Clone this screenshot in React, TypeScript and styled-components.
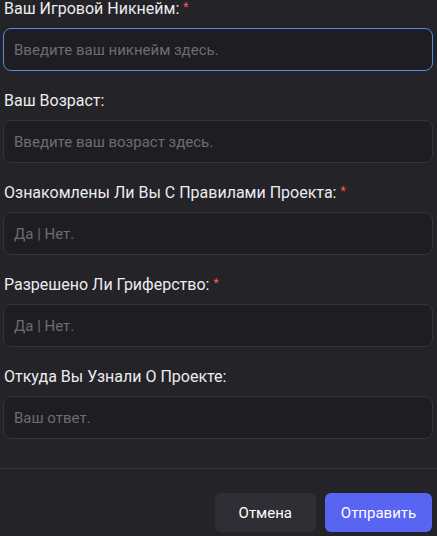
import React from 'react';
import styled, { createGlobalStyle } from 'styled-components';

const Global = createGlobalStyle`
	html, body {
		margin: 0;
		padding: 0;
		background: #232328;
	}
	body {
		font-family: Roboto, 'Noto Sans', sans-serif;
	}
`;

const Modal = styled.div`
	width: 437px;
	height: 536px;
	background: #232328;
	display: flex;
	flex-direction: column;
	overflow: hidden;
`;

const Form = styled.div`
	display: flex;
	flex-direction: column;
	gap: 20px;
	padding: 0 4px 0 3px;
	margin-top: -1px;
`;

const Field = styled.div`
	display: flex;
	flex-direction: column;
	gap: 9px;
`;

const Label = styled.label`
	font-size: 16px;
	line-height: 20px;
	color: #ececef;
	padding-left: 1px;

	span {
		color: #f55a5a;
		font-size: 12px;
		vertical-align: top;
		margin-left: 4px;
		position: relative;
		top: -2px;
	}
`;

const Input = styled.input<{ focused?: boolean }>`
	box-sizing: border-box;
	width: 100%;
	height: 43px;
	border-radius: 8px;
	border: 1px solid ${(p) => (p.focused ? '#4a8fe3' : '#35353b')};
	background: #1e1e22;
	color: #e0e0e3;
	font-family: Roboto, 'Noto Sans', sans-serif;
	font-size: 15px;
	padding: 0 10px;
	outline: none;

	&::placeholder {
		color: #6c6c73;
	}
`;

const Divider = styled.div`
	height: 1px;
	background: #36363c;
	margin-top: 29px;
`;

const Footer = styled.div`
	display: flex;
	justify-content: flex-end;
	gap: 9px;
	padding: 24px 5px 0 0;
`;

const Button = styled.button<{ primary?: boolean }>`
	height: 39px;
	border: none;
	border-radius: 6px;
	padding: 0 ${(p) => (p.primary ? 15 : 24)}px;
	min-width: ${(p) => (p.primary ? 107 : 101)}px;
	font-family: Roboto, 'Noto Sans', sans-serif;
	font-size: 15px;
	color: #ffffff;
	background: ${(p) => (p.primary ? '#5865f2' : '#2e2e34')};
	cursor: pointer;
`;

const fields = [
	{ label: 'Ваш Игровой Никнейм:', placeholder: 'Введите ваш никнейм здесь.', required: true, focused: true },
	{ label: 'Ваш Возраст:', placeholder: 'Введите ваш возраст здесь.' },
	{ label: 'Ознакомлены Ли Вы С Правилами Проекта:', placeholder: 'Да | Нет.', required: true },
	{ label: 'Разрешено Ли Гриферство:', placeholder: 'Да | Нет.', required: true },
	{ label: 'Откуда Вы Узнали О Проекте:', placeholder: 'Ваш ответ.' },
];

export default function App() {
	return (
		<Modal>
			<Global />
			<Form>
				{fields.map((f) => (
					<Field key={f.label}>
						<Label>
							{f.label}
							{f.required && <span>*</span>}
						</Label>
						<Input placeholder={f.placeholder} focused={f.focused} />
					</Field>
				))}
			</Form>
			<Divider />
			<Footer>
				<Button>Отмена</Button>
				<Button primary>Отправить</Button>
			</Footer>
		</Modal>
	);
}
